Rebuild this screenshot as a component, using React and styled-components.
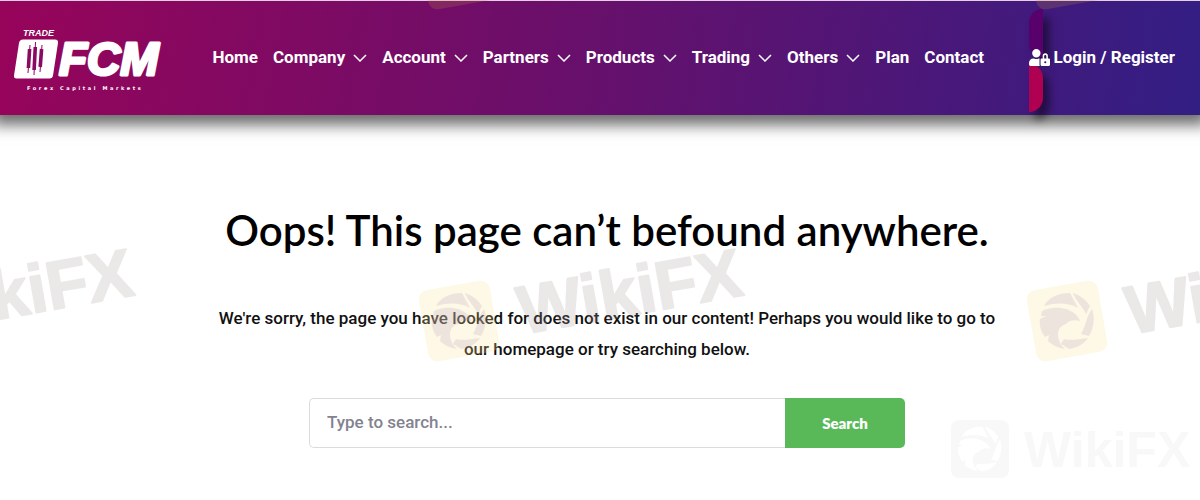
import React, { useState } from "react";
import styled, { createGlobalStyle } from "styled-components";
import { FaUserLock } from "react-icons/fa";

const GlobalStyle = createGlobalStyle`
  * {
    box-sizing: border-box;
  }

  body {
    margin: 0;
    background-color: #fff;
    font-family: Roboto, "Liberation Sans", sans-serif;
  }
`;

const Page = styled.div`
  position: relative;
  min-height: 100vh;
  overflow: hidden;
`;

const HeaderBar = styled.header`
  display: flex;
  align-items: center;
  justify-content: space-between;
  height: 115px;
  padding: 0 25px 2px 12px;
  border-top: 1px solid #e6cfe4;
  background: linear-gradient(100deg, #97045a 0%, #66106c 50%, #321e84 100%);
  background-origin: border-box;
  box-shadow: 0 2px 14px 8px rgba(0, 0, 0, 0.58);
`;

const LogoLink = styled.a`
  display: block;
  width: 156px;
  height: 72px;
`;

const Nav = styled.nav`
  display: flex;
  align-items: center;
  gap: 15px;
`;

const NavLink = styled.a`
  display: flex;
  align-items: center;
  gap: 8px;
  color: #fff;
  font-size: 17px;
  font-weight: 700;
  text-decoration: none;
  white-space: nowrap;
`;

const LoginLink = styled.a`
  position: relative;
  z-index: 0;
  display: flex;
  align-items: center;
  gap: 4px;
  color: #fff;
  font-size: 17px;
  font-weight: 700;
  text-decoration: none;
  white-space: nowrap;

  &::before,
  &::after {
    content: "";
    position: absolute;
    z-index: -1;
    left: 0;
    width: 14px;
    height: 48px;
    box-shadow: 6px 8px 8px rgba(0, 0, 0, 0.5);
  }

  &::before {
    bottom: 50%;
    border-radius: 15px 0 0 15px;
    background-color: #58006c;
  }

  &::after {
    top: 50%;
    margin-top: 7px;
    border-radius: 0 15px 15px 0;
    background-color: #b00052;
  }
`;

const Content = styled.main`
  display: flex;
  flex-direction: column;
  align-items: center;
  padding: 87px 0 50px 14px;
  text-align: center;
`;

const Title = styled.h1`
  margin: 0;
  color: #000;
  font-family: Lato, sans-serif;
  font-size: 42px;
  font-weight: 600;
  line-height: 56px;
`;

const Text = styled.p`
  max-width: 800px;
  margin: 45px 0 33px;
  color: #111;
  font-size: 17px;
  font-weight: 500;
  line-height: 31px;
`;

const SearchForm = styled.form`
  display: flex;
  width: 100%;
  max-width: 596px;
  height: 50px;
`;

const SearchInput = styled.input`
  flex: 1;
  min-width: 0;
  padding: 0 17px 2px;
  border: 1px solid #dcdcdc;
  border-right: none;
  border-radius: 5px 0 0 5px;
  outline: none;
  background-color: #fff;
  color: #000;
  font-family: inherit;
  font-size: 17px;
  font-weight: 500;

  &::placeholder {
    color: #83838f;
    opacity: 1;
  }
`;

const SearchButton = styled.button`
  width: 120px;
  border: none;
  border-radius: 0 5px 5px 0;
  background-color: #59b959;
  color: #fff;
  font-family: Lato, sans-serif;
  font-size: 15px;
  font-weight: 800;
  cursor: pointer;
`;

const Watermarks = styled.svg`
  position: absolute;
  top: 0;
  left: 0;
  pointer-events: none;
`;

const links = [
  { name: "Home" },
  { name: "Company", menu: true },
  { name: "Account", menu: true },
  { name: "Partners", menu: true },
  { name: "Products", menu: true },
  { name: "Trading", menu: true },
  { name: "Others", menu: true },
  { name: "Plan" },
  { name: "Contact" },
];

function Chevron() {
  return (
    <svg width="14" height="9" viewBox="0 0 14 9" fill="none" stroke="#fff" strokeWidth="1.5">
      <path d="M1 2l6 6 6-6" />
    </svg>
  );
}

function Logo() {
  return (
    <svg width="156" height="72" viewBox="0 0 156 72" fill="#fff">
      <text x="11" y="15" fontFamily="Liberation Sans" fontSize="9" fontWeight="700" fontStyle="italic">
        TRADE
      </text>
      <path d="M11 18.500h32q3.500 0 3 3.500l-5 32.500q-.5 3-3.500 3H4.500q-3 0-2.500-3l5-32.500q.6-3.500 4-3.500z" />
      <g stroke="#8b0960" fill="none">
        <path d="M18 24l-2 28M23.500 21l-1.500 33M30 24l-2 27" strokeWidth="1" />
        <path d="M17.600 28l-1.200 19M23.300 26l-1.200 23M29.600 28l-1.400 18" strokeWidth="3.600" />
      </g>
      <text
        x="47"
        y="54"
        fontFamily="Liberation Sans"
        fontSize="46"
        fontWeight="700"
        fontStyle="italic"
        stroke="#fff"
        strokeWidth="3"
        strokeLinejoin="round"
      >
        FCM
      </text>
      <text x="15" y="69" fontFamily="DejaVu Sans" fontSize="5" fontWeight="700" letterSpacing="2.600">
        Forex Capital Markets
      </text>
    </svg>
  );
}

// eagle head inside a shutter ring
function Eagle() {
  return (
    <g>
      <path d="M-23-15C-18-24-9-28 3-28L11-13C3-18-10-19-23-15z" />
      <path d="M6-28C13-26 19-21 23-15L19-7C16-14 9-20 6-28z" />
      <path d="M25-12C28-4 27 7 22 15L14 13C19 5 19-4 25-12z" />
      <path d="M21 17C16 24 9 27 2 28L-6 23-3 18C4 20 12 18 21 17z" />
      <path d="M-25-10C-17-14-8-14-1-12 5-10 11-6 13 0 7-2 1 0-1 3-8 5-11 12-8 19-7 23-5 25-2 28-9 27-15 24-19 20L-18 14-22 16C-26 11-28 4-27-2L-21-5-26-5z" />
    </g>
  );
}

function Watermark({ x, y }) {
  return (
    <g transform={`translate(${x} ${y}) rotate(-10)`}>
      <rect x="-36" y="-36" width="72" height="72" rx="9" fill="#fbe49a" fillOpacity="0.25" />
      <g transform="rotate(10)" fill="#b9a6c0" fillOpacity="0.24">
        <Eagle />
      </g>
      <text
        x="60"
        y="24"
        fontFamily="Liberation Sans"
        fontSize="68"
        fontWeight="700"
        fill="#a89898"
        stroke="#a89898"
        strokeWidth="2"
        strokeLinejoin="round"
        opacity="0.22"
      >
        WikiFX
      </text>
    </g>
  );
}

// corner of the tile that shows through the header
function WatermarkEdge({ x, y }) {
  return (
    <g transform={`translate(${x} ${y}) rotate(-10)`}>
      <rect x="-36" y="-36" width="72" height="72" rx="9" fill="#c08a4a" fillOpacity="0.22" />
    </g>
  );
}

export default function App() {
  const [query, setQuery] = useState("");

  const submitHandler = (e) => {
    e.preventDefault();
  };

  return (
    <Page>
      <GlobalStyle />
      <HeaderBar>
        <LogoLink href="#" aria-label="Trade FCM">
          <Logo />
        </LogoLink>
        <Nav>
          {links.map((link) => (
            <NavLink key={link.name} href="#">
              {link.name}
              {link.menu && <Chevron />}
            </NavLink>
          ))}
        </Nav>
        <LoginLink href="#">
          <FaUserLock size={21} />
          Login / Register
        </LoginLink>
      </HeaderBar>
      <Content>
        <Title>Oops! This page can’t befound anywhere.</Title>
        <Text>
          We're sorry, the page you have looked for does not exist in our content! Perhaps you would like to go to our
          homepage or try searching below.
        </Text>
        <SearchForm onSubmit={submitHandler}>
          <SearchInput
            type="text"
            aria-label="Search"
            placeholder="Type to search..."
            value={query}
            onChange={(e) => setQuery(e.target.value)}
          />
          <SearchButton type="submit">Search</SearchButton>
        </SearchForm>
      </Content>
      <Watermarks width="1200" height="500" aria-hidden="true">
        <WatermarkEdge x={459} y={-31} />
        <WatermarkEdge x={1067} y={-31} />
        <Watermark x={-150} y={321} />
        <Watermark x={459} y={321} />
        <Watermark x={1067} y={321} />
        <g fill="#f8f8f9">
          <rect x="951" y="420" width="58" height="58" rx="8" />
          <g transform="translate(980 449) scale(0.8)" fill="#fff">
            <Eagle />
          </g>
          <text x="1024" y="467" fontFamily="Liberation Sans" fontSize="50" fontWeight="700">
            WikiFX
          </text>
        </g>
      </Watermarks>
    </Page>
  );
}
